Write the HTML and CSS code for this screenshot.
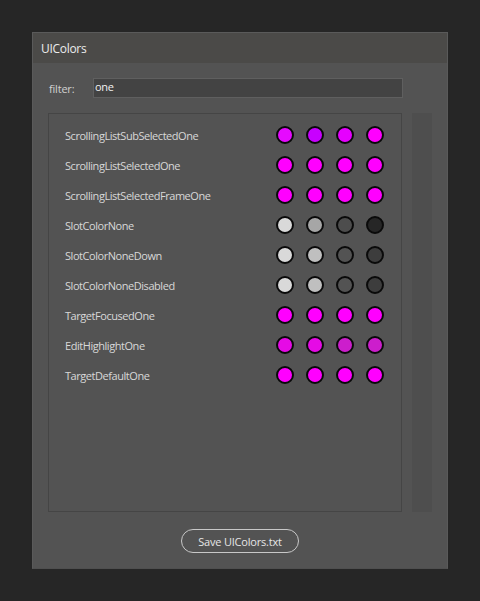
FILE: index.html
```html
<!DOCTYPE html>
<html>
<head>
<meta charset="utf-8">
<link rel="stylesheet" href="styles.css">
</head>
<body>
<div class="window">
  <div class="titlebar">UIColors</div>
  <div class="content">
    <div class="filter-row">
      <span class="filter-label">filter:</span>
      <div class="filter-input">one</div>
    </div>
    <div class="list-area">
      <div class="list">
        <div class="row"><span class="name">ScrollingListSubSelectedOne</span><span class="dots"><i class="dot" style="background:#e60aff"></i><i class="dot" style="background:#c800ff"></i><i class="dot" style="background:#e600ff"></i><i class="dot" style="background:#ff00ff"></i></span></div>
        <div class="row"><span class="name">ScrollingListSelectedOne</span><span class="dots"><i class="dot" style="background:#ff00ff"></i><i class="dot" style="background:#ff00ff"></i><i class="dot" style="background:#ff00ff"></i><i class="dot" style="background:#ff00ff"></i></span></div>
        <div class="row"><span class="name">ScrollingListSelectedFrameOne</span><span class="dots"><i class="dot" style="background:#ff00ff"></i><i class="dot" style="background:#ff00ff"></i><i class="dot" style="background:#ff00ff"></i><i class="dot" style="background:#ff00ff"></i></span></div>
        <div class="row"><span class="name">SlotColorNone</span><span class="dots"><i class="dot" style="background:#d9d9d9"></i><i class="dot" style="background:#a6a6a6"></i><i class="dot" style="background:#4d4d4d"></i><i class="dot" style="background:#262626"></i></span></div>
        <div class="row"><span class="name">SlotColorNoneDown</span><span class="dots"><i class="dot" style="background:#d9d9d9"></i><i class="dot" style="background:#bfbfbf"></i><i class="dot" style="background:#535353"></i><i class="dot" style="background:#3d3d3d"></i></span></div>
        <div class="row"><span class="name">SlotColorNoneDisabled</span><span class="dots"><i class="dot" style="background:#d9d9d9"></i><i class="dot" style="background:#bfbfbf"></i><i class="dot" style="background:#535353"></i><i class="dot" style="background:#3d3d3d"></i></span></div>
        <div class="row"><span class="name">TargetFocusedOne</span><span class="dots"><i class="dot" style="background:#ff00ff"></i><i class="dot" style="background:#ff00ff"></i><i class="dot" style="background:#ff00ff"></i><i class="dot" style="background:#ff00ff"></i></span></div>
        <div class="row"><span class="name">EditHighlightOne</span><span class="dots"><i class="dot" style="background:#e60ae6"></i><i class="dot" style="background:#e60ae6"></i><i class="dot" style="background:#cc1ecc"></i><i class="dot" style="background:#cc1ecc"></i></span></div>
        <div class="row"><span class="name">TargetDefaultOne</span><span class="dots"><i class="dot" style="background:#ff00ff"></i><i class="dot" style="background:#ff00ff"></i><i class="dot" style="background:#ff00ff"></i><i class="dot" style="background:#ff00ff"></i></span></div>
      </div>
      <div class="scrollbar"></div>
    </div>
    <div class="footer">
      <button class="save-btn">Save UIColors.txt</button>
    </div>
  </div>
</div>
</body>
</html>
```

FILE: styles.css
```css
html, body {
  margin: 0;
  padding: 0;
  background: #262626;
}
body {
  padding: 32px;
  font-family: "Open Sans", "Noto Sans", sans-serif;
  font-size: 11px;
  color: #d6d6d6;
}
.window {
  width: 416px;
  height: 537px;
  box-sizing: border-box;
  background: #535353;
  border: 1px solid #5a5a5a;
  border-bottom-color: #4f4f4f;
  display: flex;
  flex-direction: column;
}
.titlebar {
  height: 30px;
  background: #4b4a48;
  color: #ececec;
  font-size: 12px;
  letter-spacing: -0.3px;
  padding-left: 8px;
  display: flex;
  align-items: center;
  flex-shrink: 0;
}
.content {
  flex: 1;
  display: flex;
  flex-direction: column;
  padding: 15px 15px 15px 15px;
}
.filter-row {
  display: flex;
  align-items: center;
  height: 20px;
}
.filter-label {
  width: 44px;
  padding-left: 1px;
  color: #d0d0d0;
  font-size: 11px;
  letter-spacing: -0.2px;
}
.filter-input {
  width: 310px;
  height: 20px;
  box-sizing: border-box;
  background: #434343;
  border: 1px solid #5f5f5f;
  color: #f0f0f0;
  font-size: 11px;
  letter-spacing: -0.3px;
  line-height: 16px;
  padding-left: 1px;
}
.list-area {
  display: flex;
  gap: 10px;
  margin-top: 15px;
  height: 399px;
}
.list {
  width: 354px;
  box-sizing: border-box;
  border: 1px solid #454545;
  padding-top: 6px;
}
.row {
  height: 30px;
  display: flex;
  align-items: center;
}
.name {
  width: 211px;
  padding-left: 16px;
  color: #d8d8d8;
  letter-spacing: -0.45px;
}
.dots {
  display: flex;
  gap: 12px;
}
.dot {
  display: block;
  width: 14px;
  height: 14px;
  border: 2px solid #0a0a0a;
  border-radius: 50%;
}
.scrollbar {
  width: 20px;
  background: #4e4e4e;
}
.footer {
  display: flex;
  justify-content: center;
  margin-top: 17px;
}
.save-btn {
  width: 118px;
  height: 24px;
  border: 1px solid #c8c8c8;
  border-radius: 12px;
  background: transparent;
  color: #e6e6e6;
  font-family: "Open Sans", "Noto Sans", sans-serif;
  font-size: 11px;
  letter-spacing: -0.2px;
  padding: 0;
}
```
